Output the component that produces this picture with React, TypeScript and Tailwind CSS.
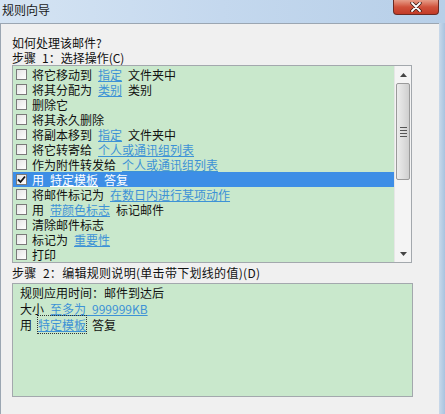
import React from 'react';

type Part = { text: string; link?: boolean };

interface Action {
  parts: Part[];
  checked?: boolean;
}

// \u2002 stands in for the half-width blank of the original dialog font
const S = '\u2002';

const actions: Action[] = [
  { parts: [{ text: `将它移动到${S}` }, { text: '指定', link: true }, { text: `${S}文件夹中` }] },
  { parts: [{ text: `将其分配为${S}` }, { text: '类别', link: true }, { text: `${S}类别` }] },
  { parts: [{ text: '删除它' }] },
  { parts: [{ text: '将其永久删除' }] },
  { parts: [{ text: `将副本移到${S}` }, { text: '指定', link: true }, { text: `${S}文件夹中` }] },
  { parts: [{ text: `将它转寄给${S}` }, { text: '个人或通讯组列表', link: true }] },
  { parts: [{ text: `作为附件转发给${S}` }, { text: '个人或通讯组列表', link: true }] },
  { parts: [{ text: `用${S}` }, { text: '特定模板', link: true }, { text: `${S}答复` }], checked: true },
  { parts: [{ text: `将邮件标记为${S}` }, { text: '在数日内进行某项动作', link: true }] },
  { parts: [{ text: `用${S}` }, { text: '带颜色标志', link: true }, { text: `${S}标记邮件` }] },
  { parts: [{ text: '清除邮件标志' }] },
  { parts: [{ text: `标记为${S}` }, { text: '重要性', link: true }] },
  { parts: [{ text: '打印' }] },
];

const font = "font-['Noto_Sans_CJK_SC','Noto_Sans',sans-serif]";

const Checkbox: React.FC<{ checked?: boolean }> = ({ checked }) => (
  <span className="w-[11px] h-[11px] shrink-0 border border-[#7a7a7a] bg-gradient-to-br from-[#e4e4e4] to-white flex items-center justify-center">
    {checked && (
      <svg width="9" height="9" viewBox="0 0 9 9">
        <path d="M1 4.5 L3.5 7 L8 1.5" stroke="#111" strokeWidth="1.8" fill="none" />
      </svg>
    )}
  </span>
);

const ActionRow: React.FC<{ action: Action }> = ({ action }) => {
  const selected = action.checked;
  return (
    <div className={`h-[15px] flex items-center gap-[5px] pl-[3px] whitespace-pre overflow-hidden ${selected ? 'bg-[#3d8ee6] text-white' : 'text-[#111]'}`}>
      <Checkbox checked={action.checked} />
      <span className="leading-[15px]">
        {action.parts.map((p, i) =>
          p.link ? (
            <span key={i} className={`underline ${selected ? 'text-white' : 'text-[#3d92d6]'}`}>
              {p.text}
            </span>
          ) : (
            <span key={i}>{p.text}</span>
          )
        )}
      </span>
    </div>
  );
};

const ScrollBar: React.FC = () => (
  <div className="w-[17px] flex flex-col bg-[#f4f4f4] border-l border-[#e6e6e6]">
    <div className="h-[17px] flex items-center justify-center">
      <svg width="7" height="4" viewBox="0 0 7 4"><path d="M0 4 L3.5 0 L7 4 Z" fill="#444" /></svg>
    </div>
    <div className="h-[97px] mx-[1px] rounded-[2px] border border-[#9a9a9a] bg-gradient-to-r from-[#ececec] via-[#dedede] to-[#cfcfcf] flex flex-col items-center justify-center gap-[2px]">
      <div className="w-[7px] h-px bg-[#555]" />
      <div className="w-[7px] h-px bg-[#555]" />
      <div className="w-[7px] h-px bg-[#555]" />
      <div className="w-[7px] h-px bg-[#555]" />
    </div>
    <div className="flex-1" />
    <div className="h-[17px] flex items-center justify-center">
      <svg width="7" height="4" viewBox="0 0 7 4"><path d="M0 0 L7 0 L3.5 4 Z" fill="#444" /></svg>
    </div>
  </div>
);

export default function App() {
  return (
    <div className={`w-[445px] h-[414px] bg-[#f0f0f0] flex flex-col overflow-hidden text-[12px] ${font}`}>
      <div className="h-[23px] shrink-0 relative flex items-start bg-gradient-to-r from-[#d5e4f3] via-[#c4d8ee] to-[#b7cfe8]">
        <span className="pl-[2px] pt-[2px] text-[12px] text-[#1a1a1a] leading-[16px]">规则向导</span>
        <div className="absolute left-[393px] top-0 w-[46px] h-[15px] rounded-b-[4px] border border-[#6b2a22] border-t-0 bg-gradient-to-b from-[#e69c88] via-[#d0513b] to-[#c23a26] flex items-center justify-center">
          <svg width="12" height="10" viewBox="0 0 12 10">
            <path d="M2 1 L10 9 M10 1 L2 9" stroke="#3a1a14" strokeWidth="3.4" strokeLinecap="round" />
            <path d="M2 1 L10 9 M10 1 L2 9" stroke="#fff" strokeWidth="1.8" strokeLinecap="round" />
          </svg>
        </div>
      </div>
      <div className="flex-1 flex">
        <div className="w-[439px] flex flex-col border-t border-l border-[#9ba6b2] pl-[11px] pt-[11px]">
          <div className="leading-[15px] text-[#111]">如何处理该邮件?</div>
          <div className="leading-[15px] text-[#111] whitespace-pre">{`步骤${S}1：选择操作(C)`}</div>
          <div className="w-[400px] h-[198px] border border-[#a3a8ad] bg-[#c9e8cc] flex">
            <div className="flex-1 pt-px">
              {actions.map((a, i) => (
                <ActionRow key={i} action={a} />
              ))}
            </div>
            <ScrollBar />
          </div>
          <div className="mt-[2px] leading-[15px] text-[#111] whitespace-pre tracking-[0.3px]">{`步骤${S}2：编辑规则说明(单击带下划线的值)(D)`}</div>
          <div className="mt-[3px] w-[401px] h-[114px] border border-[#a3a8ad] bg-[#c9e8cc] pl-[7px] pt-px text-[#111] whitespace-pre">
            <div className="leading-[16px]">规则应用时间：邮件到达后</div>
            <div className="leading-[16px]">
              {`大小${S}`}<span className="underline text-[#3d92d6]">{`至多为${S}999999KB`}</span>
            </div>
            <div className="leading-[16px]">
              {`用${S}`}<span className="underline text-[#3d92d6] outline outline-1 outline-dotted outline-[#333]">特定模板</span>{`${S}答复`}
            </div>
          </div>
        </div>
        <div className="flex-1 bg-gradient-to-r from-[#c9d9ea] to-[#a9c3df]" />
      </div>
    </div>
  );
}
